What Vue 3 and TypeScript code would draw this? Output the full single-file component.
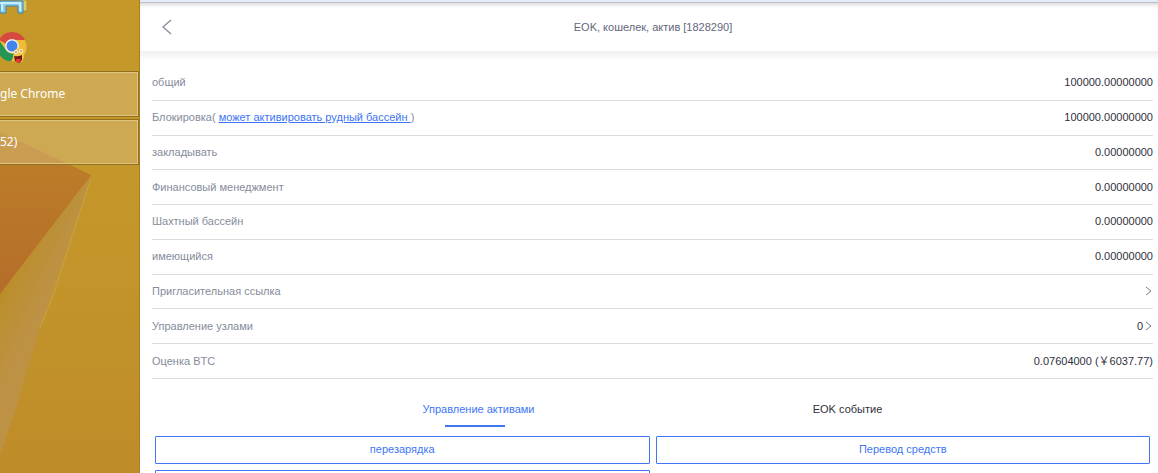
<script setup lang="ts">
import { ref } from 'vue'

interface AssetRow {
  label: string
  value?: string
  link?: string
  arrow?: boolean
}

const rows: AssetRow[] = [
  { label: 'общий', value: '100000.00000000' },
  { label: 'Блокировка(', link: 'может активировать рудный бассейн ', value: '100000.00000000' },
  { label: 'закладывать', value: '0.00000000' },
  { label: 'Финансовый менеджмент', value: '0.00000000' },
  { label: 'Шахтный бассейн', value: '0.00000000' },
  { label: 'имеющийся', value: '0.00000000' },
  { label: 'Пригласительная ссылка', arrow: true },
  { label: 'Управление узлами', value: '0', arrow: true },
  { label: 'Оценка BTC', value: '0.07604000 (￥6037.77)' },
]

const tabs = ['Управление активами', 'EOK событие']
const active = ref(0)
</script>

<template>
  <div class="screen">
    <aside class="desktop">
      <svg class="wallpaper" viewBox="0 0 140 473" preserveAspectRatio="none" aria-hidden="true">
        <defs>
          <linearGradient id="gold" x1="0" y1="0" x2="0" y2="1">
            <stop offset="0" stop-color="#c49829" />
            <stop offset="0.5" stop-color="#c4962a" />
            <stop offset="1" stop-color="#be8c29" />
          </linearGradient>
          <linearGradient id="fold" gradientUnits="userSpaceOnUse" x1="0" y1="260" x2="52" y2="285">
            <stop offset="0.3" stop-color="#bb8e2b" />
            <stop offset="1" stop-color="#bd9245" />
          </linearGradient>
          <linearGradient id="copper" x1="0" y1="0" x2="0" y2="1">
            <stop offset="0" stop-color="#bd8028" />
            <stop offset="1" stop-color="#b56d29" />
          </linearGradient>
        </defs>
        <rect width="140" height="473" fill="url(#gold)" />
        <path d="M92 176 L0 294 V454 L13 418 L40 328 Z" fill="url(#fold)" />
        <path d="M0 132 L62 161 L92 175 L0 294 Z" fill="url(#copper)" />
        <path d="M91 180 L54 294 L40 328" fill="none" stroke="#c9a150" stroke-width="1" />
      </svg>
      <div class="pins">
        <svg class="folder" width="28" height="15" viewBox="0 0 28 15" aria-hidden="true">
          <path d="M18 0 H27 V11 H22" fill="#dfca68" stroke="#a99334" />
          <path d="M0 1 H23 V13 H18 V6 H6 V13 H0 Z" fill="#8ecbe8" stroke="#3685b0" />
          <path d="M0 3 H21 M2 4 V11 M20 4 V11" fill="none" stroke="#c6edfa" stroke-width="2" />
        </svg>
        <svg class="chrome" width="28" height="34" viewBox="0 0 28 34" aria-hidden="true">
          <circle cx="12" cy="16" r="14.5" fill="#efbd35" />
          <path d="M-1 9 A14.5 14.5 0 0 1 25 9 H12 A7 7 0 0 0 6 13 Z" fill="#d64a3f" />
          <path d="M-1 9 L6 19 A7 7 0 0 0 15 22 L11 30.5 A14.5 14.5 0 0 1 -1 23 Z" fill="#249554" />
          <circle cx="12" cy="15" r="7" fill="#f2efe9" />
          <circle cx="12" cy="15" r="5.5" fill="#4385ed" />
          <path d="M14 20 Q18 15 23 19 L24 26 L22 31 H16 L13 26 Z" fill="#f2c44a" />
          <circle cx="16" cy="21" r="2" fill="#fff5d0" />
          <circle cx="21" cy="20" r="2" fill="#fff5d0" />
          <circle cx="16" cy="21" r="0.7" fill="#4b3c23" />
          <circle cx="21" cy="20" r="0.7" fill="#4b3c23" />
          <path d="M14 25 Q18 26 22 24 L22 29 L19 32 L15 30 Z" fill="#701713" />
          <path d="M16 28 H21 L19 32 L16 31 Z" fill="#ec333c" />
        </svg>
      </div>
      <button class="task">gle Chrome</button>
      <button class="task">52)</button>
    </aside>

    <main class="page">
      <header class="bar">
        <button class="back" aria-label="Назад">
          <svg width="10" height="16" viewBox="0 0 10 16" aria-hidden="true">
            <path d="M9 1 L1 8 L9 15" fill="none" stroke="#858c9d" stroke-width="1.3" />
          </svg>
        </button>
        <h1>EOK, кошелек, актив [1828290]</h1>
      </header>

      <dl class="rows">
        <div v-for="row in rows" :key="row.label" class="row">
          <dt>{{ row.label }}<template v-if="row.link">&nbsp;<a href="#">{{ row.link }}</a>)</template></dt>
          <dd>
            {{ row.value }}
            <svg v-if="row.arrow" class="arrow" width="8" height="10" viewBox="0 0 8 10" aria-hidden="true">
              <path d="M1 1 L6 5 L1 9" fill="none" stroke="#777b88" />
            </svg>
          </dd>
        </div>
      </dl>

      <nav class="tabs">
        <button v-for="(tab, i) in tabs" :key="tab" :class="['tab', { active: active === i }]" @click="active = i">
          {{ tab }}
        </button>
      </nav>
      <div class="actions">
        <button class="action">перезарядка</button>
        <button class="action">Перевод средств</button>
        <button class="action" aria-label="Действие"></button>
      </div>
    </main>
  </div>
</template>

<style>
body {
  margin: 0;
  overflow: hidden;
}
</style>

<style scoped>
.screen {
  display: flex;
  height: 100vh;
  overflow: hidden;
  font-family: "Liberation Sans", Arial, "Noto Sans CJK SC", sans-serif;
  font-size: 11px;
  line-height: 16px;
  background: #fff;
}
button {
  margin: 0;
  padding: 0;
  border: 0;
  background: none;
  font: inherit;
  cursor: pointer;
}
.desktop {
  position: relative;
  box-sizing: border-box;
  flex: 0 0 140px;
  border-right: 1px solid #a97f20;
  overflow: hidden;
}
.wallpaper {
  position: absolute;
  inset: 0;
  width: 100%;
  height: 100%;
}
.pins {
  position: relative;
  display: flex;
  flex-direction: column;
  gap: 16px;
  height: 71px;
}
.task {
  position: relative;
  display: block;
  box-sizing: border-box;
  width: 100%;
  height: 46px;
  margin-bottom: 2px;
  border: 1px solid #93701f;
  border-left: 0;
  box-shadow: inset -1px 1px #e0c580, inset 0 -1px #e0c580;
  background: rgba(216, 188, 123, 0.5);
  color: #fff;
  font-family: "Noto Sans", sans-serif;
  font-size: 12px;
  text-align: left;
}
.page {
  flex: 1;
  min-width: 0;
  border-top: 2px solid #e3edfa;
}
.bar {
  display: grid;
  grid-template-columns: 54px 1fr 46px;
  align-items: center;
  height: 49px;
  box-shadow: inset 0 1px #bfc1c4, inset 0 5px 5px -3px #ccc;
}
.back {
  display: grid;
  place-items: center;
  height: 32px;
}
h1 {
  margin: 0;
  color: #5f687b;
  font-size: 11px;
  font-weight: 400;
  text-align: center;
}
.rows {
  display: grid;
  grid-auto-rows: 1fr;
  min-height: 313px;
  margin: 0;
  padding: 15px 5px 0 12px;
  background: linear-gradient(#efefef, #fff 10px);
}
.row {
  display: flex;
  align-items: center;
  justify-content: space-between;
  padding-bottom: 1px;
  border-bottom: 1px solid #dcdcdc;
}
dt {
  color: #858c9b;
}
a {
  color: #3d73f5;
  white-space: pre;
}
dd {
  display: flex;
  align-items: center;
  margin: 0;
  color: #2f3040;
}
.arrow {
  margin-left: 2px;
}
.tabs {
  display: grid;
  grid-template-columns: 1fr 1fr;
  margin: 14px 126px 0 154px;
}
.tab {
  position: relative;
  height: 34px;
  padding-bottom: 2px;
  color: #2f3040;
}
.tab.active {
  color: #4076f5;
}
.tab.active::after {
  content: "";
  position: absolute;
  bottom: 0;
  left: 50%;
  width: 60px;
  height: 2px;
  margin-left: -34px;
  background: #4076f5;
}
.actions {
  display: grid;
  grid-template-columns: 1fr 1fr;
  gap: 6px;
  margin: 9px 8px 0 15px;
}
.action {
  height: 28px;
  padding-bottom: 2px;
  border: 1px solid #4076f5;
  border-radius: 1px;
  color: #4076f5;
}
</style>
